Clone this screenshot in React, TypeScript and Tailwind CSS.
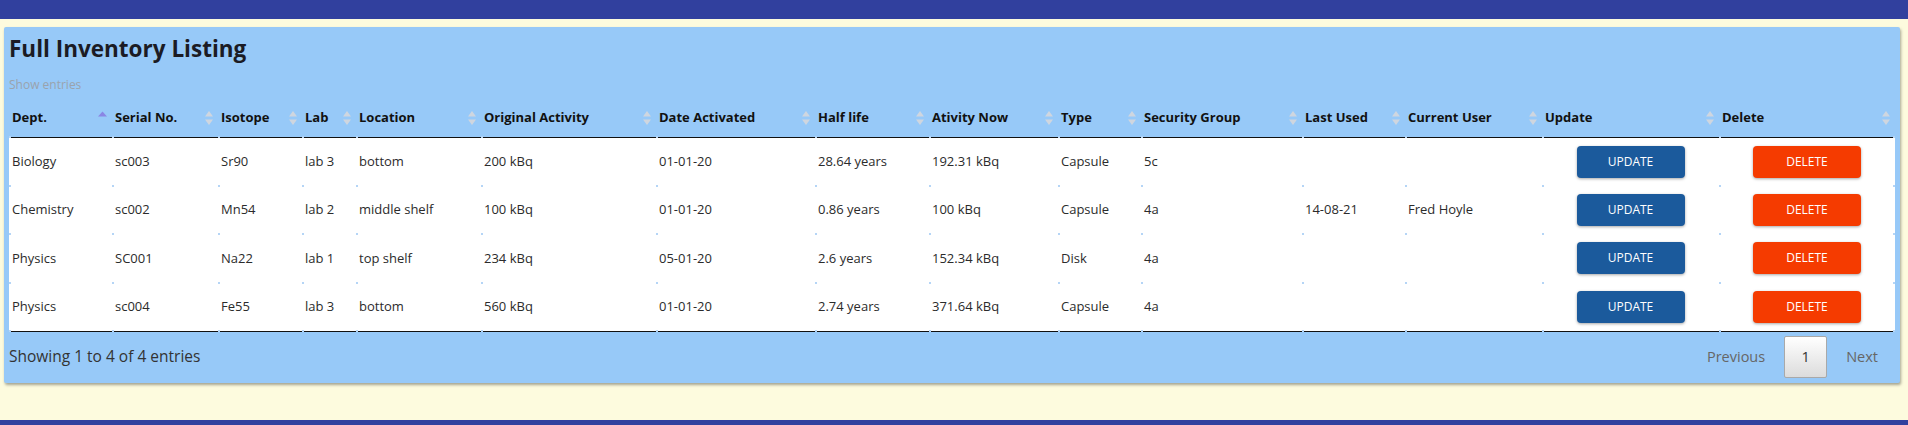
import React from 'react';

type Row = string[];

const columns = [
  { label: 'Dept.', w: 'w-[103px]' },
  { label: 'Serial No.', w: 'w-[106px]' },
  { label: 'Isotope', w: 'w-[84px]' },
  { label: 'Lab', w: 'w-[54px]' },
  { label: 'Location', w: 'w-[125px]' },
  { label: 'Original Activity', w: 'w-[175px]' },
  { label: 'Date Activated', w: 'w-[159px]' },
  { label: 'Half life', w: 'w-[114px]' },
  { label: 'Ativity Now', w: 'w-[129px]' },
  { label: 'Type', w: 'w-[83px]' },
  { label: 'Security Group', w: 'w-[161px]' },
  { label: 'Last Used', w: 'w-[103px]' },
  { label: 'Current User', w: 'w-[137px]' },
  { label: 'Update', w: 'w-[177px]' },
  { label: 'Delete', w: 'w-[176px]' },
];

const rows: Row[] = [
  ['Biology', 'sc003', 'Sr90', 'lab 3', 'bottom', '200 kBq', '01-01-20', '28.64 years', '192.31 kBq', 'Capsule', '5c', '', ''],
  ['Chemistry', 'sc002', 'Mn54', 'lab 2', 'middle shelf', '100 kBq', '01-01-20', '0.86 years', '100 kBq', 'Capsule', '4a', '14-08-21', 'Fred Hoyle'],
  ['Physics', 'SC001', 'Na22', 'lab 1', 'top shelf', '234 kBq', '05-01-20', '2.6 years', '152.34 kBq', 'Disk', '4a', '', ''],
  ['Physics', 'sc004', 'Fe55', 'lab 3', 'bottom', '560 kBq', '01-01-20', '2.74 years', '371.64 kBq', 'Capsule', '4a', '', ''],
];

// little corner dots the table borders leave behind
const dot =
  "relative before:content-[''] before:absolute before:left-0 before:bottom-[-1px] before:h-[2px] before:w-[2px] before:bg-[#b5d5f6]";
const lastDot =
  "after:content-[''] after:absolute after:right-0 after:bottom-[-1px] after:h-[2px] after:w-[2px] after:bg-[#b5d5f6]";

function SortBoth() {
  return (
    <svg width="8" height="14" viewBox="0 0 8 14" aria-hidden>
      <path d="M4 0 L8 5.5 L0 5.5 Z" fill="#cfd6df" />
      <path d="M4 14 L8 8.5 L0 8.5 Z" fill="#cfd6df" />
    </svg>
  );
}

function SortAsc() {
  return (
    <svg width="9" height="14" viewBox="0 0 9 14" aria-hidden>
      <path d="M4.5 0.5 L9 5.5 L0 5.5 Z" fill="#8a86e4" />
    </svg>
  );
}

export default function App() {
  return (
    <div className="flex h-[425px] w-[1908px] flex-col bg-[#fdfbde] font-['Open_Sans',sans-serif]">
      <div className="h-[19px] shrink-0 bg-[#31409e]" />

      <div className="flex-1 pt-[8px]">
        <section className="ml-[4px] w-[1896px] rounded-[2px] bg-[#97c9f8] px-[5px] shadow-[1px_2px_3px_rgba(0,0,0,0.35)]">
          <h1 className="pt-[6px] text-[22.5px] font-bold leading-[32px] text-[#1b1b24]">Full Inventory Listing</h1>
          <p className="mt-[12px] text-[12px] leading-[15px] text-[#9aa3ad]">Show entries</p>

          <table className="mt-[7px] w-[1886px] table-fixed border-collapse text-[13px]">
            <colgroup>
              {columns.map((c) => (
                <col key={c.label} className={c.w} />
              ))}
            </colgroup>
            <thead>
              <tr className="h-[38px] border-b border-[#111]">
                {columns.map((c, i) => (
                  <th
                    key={c.label}
                    className={`${dot} ${i === columns.length - 1 ? lastDot : ''} px-[3px] text-left font-bold text-[#111]`}
                  >
                    <div className="flex items-center justify-between pr-[2px]">
                      <span>{c.label}</span>
                      {i === 0 ? <SortAsc /> : <SortBoth />}
                    </div>
                  </th>
                ))}
              </tr>
            </thead>
            <tbody className="bg-white text-[#2b2b2b]">
              {rows.map((r, ri) => (
                <tr key={ri} className={`h-[48.5px] ${ri === rows.length - 1 ? 'border-b border-[#111]' : ''}`}>
                  {r.map((v, ci) => (
                    <td key={ci} className={`${dot} px-[3px]`}>
                      {v}
                    </td>
                  ))}
                  <td className={`${dot} text-center`}>
                    <button
                      type="button"
                      className="h-[32px] w-[108px] rounded-[4px] bg-[#1b5a9c] text-[12px] text-white shadow-[0_1px_3px_rgba(0,0,0,0.35)]"
                    >
                      UPDATE
                    </button>
                  </td>
                  <td className={`${dot} ${lastDot} text-center`}>
                    <button
                      type="button"
                      className="h-[32px] w-[108px] rounded-[4px] bg-[#f53b00] text-[12px] text-white shadow-[0_1px_3px_rgba(0,0,0,0.35)]"
                    >
                      DELETE
                    </button>
                  </td>
                </tr>
              ))}
            </tbody>
          </table>

          <div className="flex h-[51px] items-center justify-between">
            <span className="text-[15.5px] text-[#333]">Showing 1 to 4 of 4 entries</span>
            <div className="flex items-center pr-[17px] text-[14.5px] text-[#666]">
              <span className="mr-[19px]">Previous</span>
              <span className="flex h-[42px] w-[43px] items-center justify-center rounded-[2px] border border-[#a9a9a9] bg-gradient-to-b from-white to-[#dcdcdc] text-[#333]">
                1
              </span>
              <span className="ml-[19px]">Next</span>
            </div>
          </div>
        </section>
      </div>

      <div className="h-[5px] shrink-0 bg-[#31409e]" />
    </div>
  );
}
